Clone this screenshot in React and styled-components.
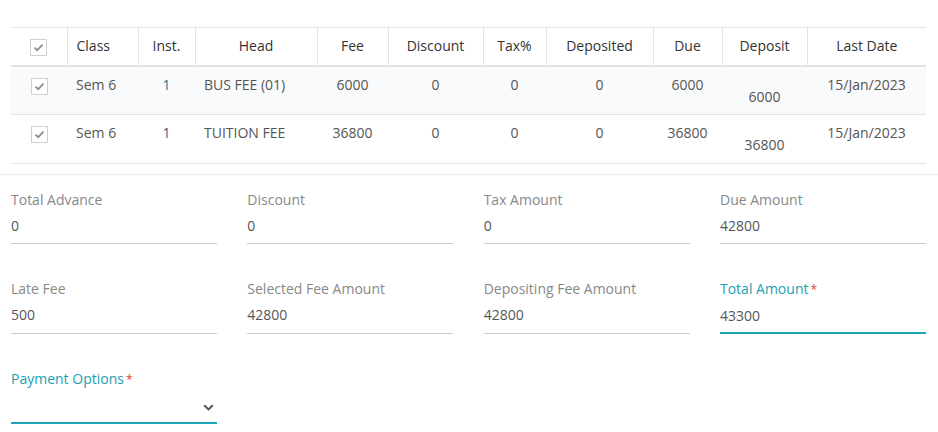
import React from "react";
import styled, { createGlobalStyle } from "styled-components";

const Global = createGlobalStyle`
  html, body { margin: 0; padding: 0; background: #fff; }
  body { font-family: "Open Sans", "Noto Sans", sans-serif; font-size: 14px; color: #555; }
  * { box-sizing: border-box; }
`;

const Page = styled.div`
  padding-top: 27px;
  width: 938px;
`;

const TableWrap = styled.div`
  padding: 0 12px 0 11px;
`;

const Table = styled.table`
  width: 915px;
  table-layout: fixed;
  border-collapse: collapse;
`;

const Th = styled.th`
  width: ${(p) => p.$w}px;
  height: 38px;
  padding: 0 8px;
  font-weight: 400;
  color: #333;
  text-align: ${(p) => p.$align || "center"};
  padding-left: ${(p) => (p.$align === "left" ? "9px" : "8px")};
  border-top: 1px solid #e3e3e3;
  border-bottom: 2px solid #e3e3e3;
  border-left: ${(p) => (p.$first ? "none" : "1px solid #e3e3e3")};
  line-height: 20px;
  white-space: nowrap;
`;

const Tr = styled.tr`
  background: ${(p) => (p.$alt ? "#f9fafc" : "#fff")};
  border-bottom: 1px solid #e3e3e3;
`;

const Td = styled.td`
  height: 49px;
  padding: 8px 8px 0;
  padding-left: ${(p) => (p.$align === "left" ? "9px" : "8px")};
  vertical-align: top;
  text-align: ${(p) => p.$align || "center"};
  line-height: 20px;
  color: ${(p) => p.$color || "#555"};
  white-space: nowrap;
`;

const DepositValue = styled.div`
  padding-top: 12px;
`;

const Check = styled.span`
  display: inline-flex;
  align-items: center;
  justify-content: center;
  width: 17px;
  height: 17px;
  border: 1px solid #cfcfcf;
  background: #fff;
  vertical-align: middle;
  margin-top: ${(p) => (p.$head ? "0" : "1px")};
`;

const Separator = styled.div`
  height: 1px;
  background: #ececec;
  margin-top: 10px;
`;

const Form = styled.div`
  display: grid;
  width: 926px;
  grid-template-columns: repeat(4, 206px);
  column-gap: 30.33px;
  row-gap: 35px;
  padding: 15px 0 0 11px;
`;

const Field = styled.div`
  display: flex;
  flex-direction: column;
  border-bottom: ${(p) => (p.$active ? "2px solid #1aa5b8" : "1px solid #c7ced8")};
`;

const Label = styled.div`
  line-height: 20px;
  color: ${(p) => (p.$active ? "#1ba0b3" : "#888")};
`;

const Star = styled.span`
  color: #e53935;
  margin-left: 2px;
  font-size: 12px;
`;

const Value = styled.div`
  line-height: 20px;
  height: ${(p) => (p.$active ? 32 : 33)}px;
  padding-top: 6px;
  color: #555;
  display: flex;
  align-items: flex-start;
  justify-content: space-between;
`;

const Chevron = styled.svg`
  margin-right: 3px;
  margin-top: 8px;
`;

const CheckIcon = () => (
  <svg width="11" height="9" viewBox="0 0 11 9">
    <path d="M1.5 4.6 L4.2 7.2 L9.6 1.6" fill="none" stroke="#8d8d8d" strokeWidth="1.8" />
  </svg>
);

const cols = [
  { k: "chk", w: 56 },
  { k: "Class", w: 71, align: "left" },
  { k: "Inst.", w: 57 },
  { k: "Head", w: 122 },
  { k: "Fee", w: 71 },
  { k: "Discount", w: 95 },
  { k: "Tax%", w: 63 },
  { k: "Deposited", w: 107 },
  { k: "Due", w: 69 },
  { k: "Deposit", w: 85 },
  { k: "Last Date", w: 119 },
];

const rows = [
  { cls: "Sem 6", inst: "1", head: "BUS FEE (01)", fee: "6000", disc: "0", tax: "0", dep: "0", due: "6000", deposit: "6000", date: "15/Jan/2023", instColor: "#2c7a93" },
  { cls: "Sem 6", inst: "1", head: "TUITION FEE", fee: "36800", disc: "0", tax: "0", dep: "0", due: "36800", deposit: "36800", date: "15/Jan/2023", instColor: "#3a5f72" },
];

const fields = [
  { label: "Total Advance", value: "0" },
  { label: "Discount", value: "0" },
  { label: "Tax Amount", value: "0" },
  { label: "Due Amount", value: "42800" },
  { label: "Late Fee", value: "500" },
  { label: "Selected Fee Amount", value: "42800" },
  { label: "Depositing Fee Amount", value: "42800" },
  { label: "Total Amount", value: "43300", active: true, required: true },
];

export default function App() {
  return (
    <>
      <Global />
      <Page>
        <TableWrap>
          <Table>
            <thead>
              <tr>
                {cols.map((c, i) => (
                  <Th key={c.k} $w={c.w} $align={c.align} $first={i === 0}>
                    {c.k === "chk" ? (
                      <Check $head>
                        <CheckIcon />
                      </Check>
                    ) : (
                      c.k
                    )}
                  </Th>
                ))}
              </tr>
            </thead>
            <tbody>
              {rows.map((r, i) => (
                <Tr key={i} $alt={i === 0}>
                  <Td>
                    <Check>
                      <CheckIcon />
                    </Check>
                  </Td>
                  <Td $align="left">{r.cls}</Td>
                  <Td $color={r.instColor}>{r.inst}</Td>
                  <Td $align="left">{r.head}</Td>
                  <Td>{r.fee}</Td>
                  <Td>{r.disc}</Td>
                  <Td>{r.tax}</Td>
                  <Td>{r.dep}</Td>
                  <Td>{r.due}</Td>
                  <Td>
                    <DepositValue>{r.deposit}</DepositValue>
                  </Td>
                  <Td>{r.date}</Td>
                </Tr>
              ))}
            </tbody>
          </Table>
        </TableWrap>
        <Separator />
        <Form>
          {fields.map((f) => (
            <Field key={f.label} $active={f.active}>
              <Label $active={f.active}>
                {f.label}
                {f.required && <Star>*</Star>}
              </Label>
              <Value $active={f.active}>{f.value}</Value>
            </Field>
          ))}
          <Field $active>
            <Label $active>
              Payment Options<Star>*</Star>
            </Label>
            <Value $active>
              <span />
              <Chevron width="11" height="7" viewBox="0 0 11 7">
                <path d="M1.2 1.2 L5.5 5.4 L9.8 1.2" fill="none" stroke="#555" strokeWidth="2" />
              </Chevron>
            </Value>
          </Field>
        </Form>
      </Page>
    </>
  );
}
